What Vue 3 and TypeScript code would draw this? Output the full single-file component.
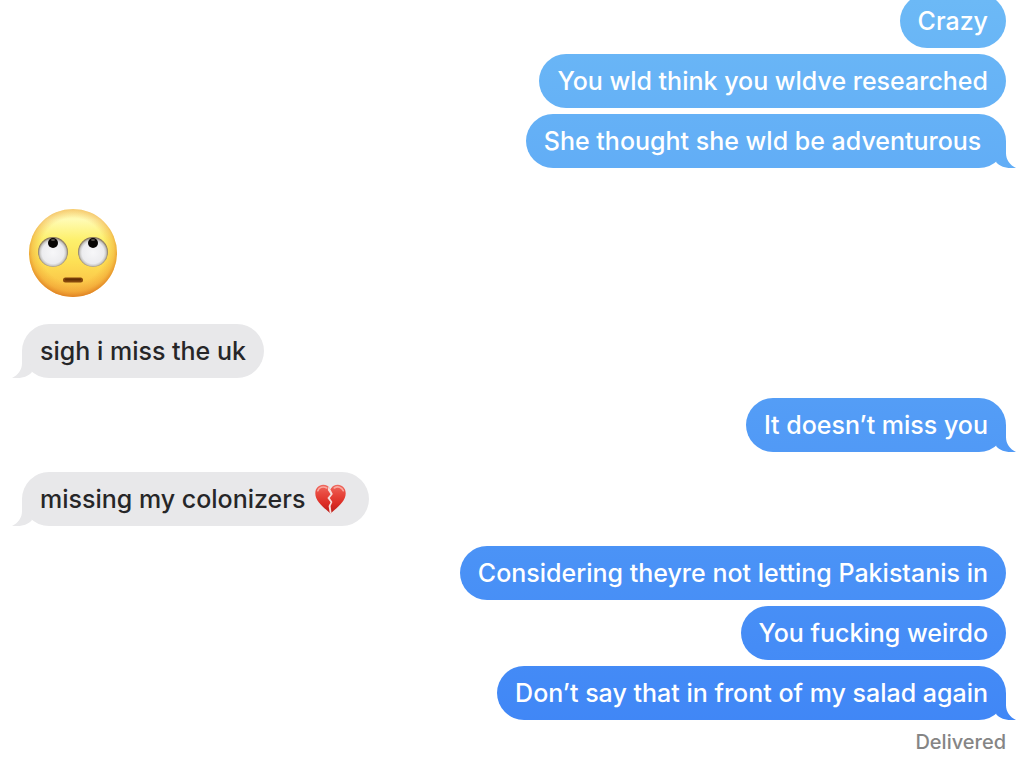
<script setup lang="ts">
interface Message {
  id: number
  from: 'me' | 'them'
  text: string
  sticker?: 'eye-roll'
  glyph?: 'broken-heart'
  tail?: boolean
}

const messages: Message[] = [
  { id: 1, from: 'me', text: 'Crazy' },
  { id: 2, from: 'me', text: 'You wld think you wldve researched' },
  { id: 3, from: 'me', text: 'She thought she wld be adventurous ', tail: true },
  { id: 4, from: 'them', text: '', sticker: 'eye-roll' },
  { id: 5, from: 'them', text: 'sigh i miss the uk', tail: true },
  { id: 6, from: 'me', text: 'It doesn’t miss you', tail: true },
  { id: 7, from: 'them', text: 'missing my colonizers ', glyph: 'broken-heart', tail: true },
  { id: 8, from: 'me', text: 'Considering theyre not letting Pakistanis in' },
  { id: 9, from: 'me', text: 'You fucking weirdo' },
  { id: 10, from: 'me', text: 'Don’t say that in front of my salad again', tail: true },
]

function startsGroup(index: number): boolean {
  if (index === 0) return false
  const prev = messages[index - 1]
  return prev.from !== messages[index].from || prev.sticker !== undefined
}
</script>

<template>
  <main class="chat">
    <ol class="thread">
      <li
        v-for="(m, i) in messages"
        :key="m.id"
        class="row"
        :class="[m.from, { group: startsGroup(i) }]"
      >
        <svg v-if="m.sticker" class="sticker" viewBox="0 0 88 88" role="img" aria-label="Face with rolling eyes">
          <defs>
            <linearGradient id="face" x1="0" y1="0" x2="0" y2="1">
              <stop offset="0" stop-color="#fdf0a0" />
              <stop offset="0.12" stop-color="#fffbb4" />
              <stop offset="0.35" stop-color="#fdf06c" />
              <stop offset="0.6" stop-color="#fde055" />
              <stop offset="0.85" stop-color="#fbc649" />
              <stop offset="1" stop-color="#f5ae3c" />
            </linearGradient>
            <radialGradient id="rim" cx="0.5" cy="0.47" r="0.54">
              <stop offset="0.68" stop-color="#ee9a2e" stop-opacity="0" />
              <stop offset="0.86" stop-color="#ec962c" stop-opacity="0.4" />
              <stop offset="1" stop-color="#d9761e" stop-opacity="0.95" />
            </radialGradient>
            <radialGradient id="eye" cx="0.5" cy="0.52" r="0.5">
              <stop offset="0" stop-color="#f7f7f9" />
              <stop offset="0.74" stop-color="#ececef" />
              <stop offset="0.88" stop-color="#c9c8c6" />
              <stop offset="1" stop-color="#85745c" />
            </radialGradient>
          </defs>
          <circle cx="44" cy="44" r="44" fill="url(#face)" />
          <circle cx="44" cy="44" r="44" fill="url(#rim)" />
          <circle cx="24" cy="43" r="15" fill="url(#eye)" />
          <circle cx="64" cy="43" r="15" fill="url(#eye)" />
          <circle cx="24" cy="34" r="5" fill="#080605" />
          <circle cx="64" cy="34" r="5" fill="#080605" />
          <ellipse cx="24" cy="31" rx="2" ry="1" fill="#55504a" />
          <ellipse cx="64" cy="31" rx="2" ry="1" fill="#55504a" />
          <rect x="34" y="68.500" width="20" height="5" rx="2.500" fill="#85470c" />
          <rect x="36" y="69.500" width="16" height="2" rx="1" fill="#643005" />
        </svg>
        <p v-else class="bubble" :class="{ tail: m.tail }">{{ m.text }}<svg
            v-if="m.glyph"
            class="glyph"
            viewBox="0 0 36 30"
            role="img"
            aria-label="Broken heart"
          >
            <defs>
              <linearGradient id="heart" x1="0" y1="0" x2="0" y2="1">
                <stop offset="0" stop-color="#ee6a60" />
                <stop offset="0.3" stop-color="#e8493f" />
                <stop offset="0.65" stop-color="#dc2d25" />
                <stop offset="1" stop-color="#b91c18" />
              </linearGradient>
            </defs>
            <path
              d="M15.500 5C13.700 2.200 11.200 .8 8.200 .8 3.600 .8 .3 4.400 .3 9.200c0 8.300 8.400 14.200 15.200 20.200 6.800-6 15.200-11.900 15.200-20.200 0-4.800-3.300-8.400-7.900-8.400-3 0-5.500 1.400-7.300 4.200z"
              fill="url(#heart)"
            />
            <path d="M2.800 6.800C4 3.300 8 1.900 11.800 4" fill="none" stroke="#f9a9a0" stroke-width="1.600" stroke-linecap="round" />
            <path d="M19.300 4C22.500 1.900 27 3 28.300 6.800" fill="none" stroke="#f9a9a0" stroke-width="1.600" stroke-linecap="round" />
            <path
              d="M13.500 2.500L15.500 5.500 17.800 10 14.800 14 17.400 18 15.600 22 16.600 29.500H14.800L13.600 22 15.600 18.200 12.400 14 15.600 10.200 12.800 6z"
              fill="#f6dfdd"
            />
            <path d="M13.300 1L17.700 1 15.500 5.200z" fill="#e8e8ea" />
          </svg></p>
      </li>
    </ol>
    <p class="status">Delivered</p>
  </main>
</template>

<style>
body {
  background: #fff;
}
</style>

<style scoped>
.chat {
  margin-top: -6px;
  padding: 0 26px 0 22px;
  font-family: Inter, "Liberation Sans", sans-serif;
  font-weight: 500;
}

.thread {
  display: flex;
  flex-direction: column;
  gap: 6px;
  margin: 0;
  padding: 0;
  list-style: none;
}

.row {
  display: flex;
}

.row.group {
  margin-top: 14px;
}

.row.me {
  justify-content: flex-end;
}

.sticker {
  display: block;
  width: 88px;
  height: 88px;
  margin: 21px 7px 7px;
}

.bubble {
  position: relative;
  margin: 0;
  padding: 12px 18px;
  border-radius: 27px;
  font-size: 25px;
  line-height: 30px;
  white-space: pre-wrap;
}

.me .bubble,
.me .bubble.tail::after {
  background: linear-gradient(#6cb9f6, #3e84f6) fixed;
}

.me .bubble {
  color: #fff;
}

.them .bubble,
.them .bubble.tail::after {
  background: #e8e8ea;
}

.them .bubble {
  color: #262628;
}

.bubble.tail::after {
  content: "";
  position: absolute;
  right: -10px;
  bottom: 0;
  width: 20px;
  height: 27px;
  clip-path: path("M5 0H10V12C10 19 14 24 20 27C12 28 4 26 0 21Z");
}

.them .bubble.tail::after {
  right: auto;
  left: -10px;
  clip-path: path("M15 0H10V12C10 19 6 24 0 27C8 28 16 26 20 21Z");
}

.glyph {
  width: 36px;
  height: 30px;
  margin-left: 3px;
  vertical-align: top;
}

.status {
  margin: 10px 0 0;
  color: #858585;
  font-size: 20px;
  line-height: 24px;
  text-align: right;
}
</style>
